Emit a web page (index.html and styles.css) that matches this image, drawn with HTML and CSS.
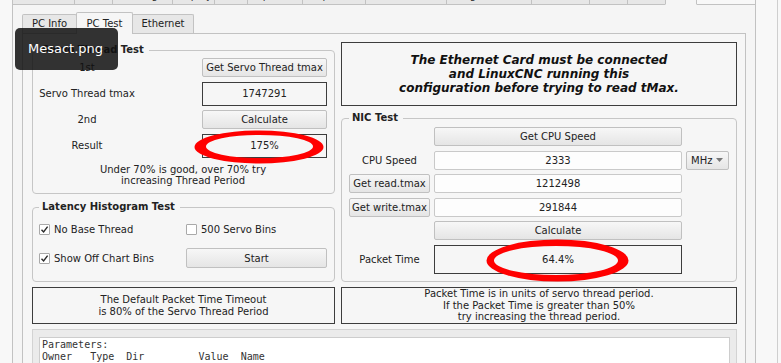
FILE: index.html
```html
<!DOCTYPE html>
<html lang="en">
<head>
  <meta charset="UTF-8">
  <title>Mesa Configuration Tool - PC Test</title>
  <link rel="stylesheet" href="styles.css">
</head>
<body>
  <div class="screen">
    <div class="main">
      <div class="top-tabs">
        <span class="ttab">Machine</span>
        <span class="ttab">Info</span>
        <span class="ttab">Settings</span>
        <span class="ttab">Display</span>
        <span class="ttab">Axis</span>
        <span class="ttab">Spindle</span>
        <span class="ttab">Options</span>
        <span class="ttab">Smart Serial</span>
        <span class="ttab">Daughter Cards</span>
        <span class="ttab">HAL</span>
        <span class="ttab">INI</span>
        <span class="ttab">Pins</span>
        <span class="ttab current">PC</span>
        <span class="ttab-fill"></span>
      </div>

      <div class="outer-pane">
        <div class="itabs">
          <span class="itab itab-info">PC Info</span>
          <span class="itab itab-test active">PC Test</span>
          <span class="itab itab-eth">Ethernet</span>
        </div>

        <div class="pane">
          <div class="pc-test">

            <div class="col">
              <fieldset class="group servo">
                <legend>Servo Thread Test</legend>
                <div class="servo-grid">
                  <span class="lbl">1st</span>
                  <button class="btn ctl">Get Servo Thread tmax</button>
                  <span class="lbl">Servo Thread tmax</span>
                  <span class="readout ctl">1747291</span>
                  <span class="lbl">2nd</span>
                  <button class="btn ctl">Calculate</button>
                  <span class="lbl">Result</span>
                  <span class="readout ctl marked">
                    175%
                    <svg class="ring ring-result" width="130" height="34" viewBox="0 0 130 34">
                      <path fill-rule="evenodd" d="M0.5,17 a64.5,16.5 0 1,0 129,0 a64.5,16.5 0 1,0 -129,0 Z M12,16.5 a53.5,11.5 0 1,0 107,0 a53.5,11.5 0 1,0 -107,0 Z"/>
                    </svg>
                  </span>
                </div>
                <p class="hint">Under 70% is good, over 70% try<br>increasing Thread Period</p>
              </fieldset>

              <fieldset class="group latency">
                <legend>Latency Histogram Test</legend>
                <div class="latency-grid">
                  <label class="check"><span class="box on"><svg width="9" height="9" viewBox="0 0 9 9"><path d="M1.5 4.8 L3.6 7 L7.6 1.6"/></svg></span>No Base Thread</label>
                  <label class="check"><span class="box"></span>500 Servo Bins</label>
                  <label class="check"><span class="box on"><svg width="9" height="9" viewBox="0 0 9 9"><path d="M1.5 4.8 L3.6 7 L7.6 1.6"/></svg></span>Show Off Chart Bins</label>
                  <button class="btn">Start</button>
                </div>
              </fieldset>
            </div>

            <div class="col">
              <div class="notice">
                The Ethernet Card must be connected<br>
                and LinuxCNC running this<br>
                configuration before trying to read tMax.
              </div>

              <fieldset class="group nic">
                <legend>NIC Test</legend>
                <div class="nic-grid">
                  <button class="btn mid">Get CPU Speed</button>
                  <span class="lbl">CPU Speed</span>
                  <span class="edit">2333</span>
                  <span class="combo">MHz<svg width="7" height="4" viewBox="0 0 7 4"><path d="M0 0 H7 L3.5 4 Z"/></svg></span>
                  <button class="btn">Get read.tmax</button>
                  <span class="edit">1212498</span>
                  <button class="btn">Get write.tmax</button>
                  <span class="edit">291844</span>
                  <button class="btn mid">Calculate</button>
                  <span class="lbl">Packet Time</span>
                  <span class="readout marked">
                    64.4%
                    <svg class="ring ring-packet" width="143" height="43" viewBox="0 0 143 43">
                      <path fill-rule="evenodd" d="M0.5,21.5 a71,21 0 1,0 142,0 a71,21 0 1,0 -142,0 Z M8,21.5 a62,14.5 0 1,0 124,0 a62,14.5 0 1,0 -124,0 Z"/>
                    </svg>
                  </span>
                </div>
              </fieldset>
            </div>

            <div class="frame-note">
              The Default Packet Time Timeout<br>
              is 80% of the Servo Thread Period
            </div>
            <div class="frame-note">
              Packet Time is in units of servo thread period.<br>
              If the Packet Time is greater than 50%<br>
              try increasing the thread period.
            </div>

            <div class="params">
<pre>Parameters:
Owner   Type  Dir         Value  Name</pre>
            </div>

          </div>
        </div>
      </div>
    </div>
    <div class="gutter"></div>

    <div class="tooltip">Mesact.png</div>
  </div>
</body>
</html>
```

FILE: styles.css
```css
* {
  box-sizing: border-box;
}

html, body {
  margin: 0;
  padding: 0;
  background: #f8f8f8;
  color: #222;
  font-family: "DejaVu Sans", "Liberation Sans", sans-serif;
  font-size: 10px;
  overflow: hidden;
}

.screen {
  position: relative;
  display: flex;
  height: 363px;
  padding-left: 12px;
}

.main {
  width: 744px;
  flex: none;
}

.gutter {
  width: 22px;
  flex: none;
  border-right: 1px solid #cfcfcf;
}

/* main window tabs, only their lower edge is on screen */
.top-tabs {
  display: flex;
  align-items: flex-end;
  height: 5px;
  overflow: hidden;
}

.ttab {
  flex: none;
  height: 22px;
  padding-top: 5px;
  line-height: 14px;
  text-align: center;
  white-space: nowrap;
  overflow: hidden;
  color: #333;
  background: #e7e7e7;
  border: 1px solid #c2c2c2;
  border-right: none;
}

.ttab:nth-child(1) { width: 62px; }
.ttab:nth-child(2) { width: 38px; }
.ttab:nth-child(3) { width: 60px; }
.ttab:nth-child(4) { width: 42px; }
.ttab:nth-child(5) { width: 33px; }
.ttab:nth-child(6) { width: 55px; }
.ttab:nth-child(7) { width: 63px; }
.ttab:nth-child(8) { width: 81px; }
.ttab:nth-child(9) { width: 85px; }
.ttab:nth-child(10) { width: 58px; }
.ttab:nth-child(11) { width: 38px; }
.ttab:nth-child(12) { width: 38px; }

.ttab.current {
  width: 32px;
  background: #f5f5f5;
  border-right: 1px solid #c2c2c2;
  border-bottom-color: #f5f5f5;
}

.ttab-fill {
  flex: 1;
  height: 5px;
  border-bottom: 1px solid #c2c2c2;
  border-right: 1px solid #c2c2c2;
}

.outer-pane {
  height: 400px;
  padding: 7px 9px 0 9px;
  background: #f5f5f5;
  border: 1px solid #c2c2c2;
  border-top: none;
}

/* inner tab widget */
.itabs {
  position: relative;
  z-index: 1;
  display: flex;
  align-items: flex-end;
  height: 22px;
}

.itab {
  height: 19px;
  margin-bottom: 1px;
  line-height: 18px;
  text-align: center;
  background: #e7e7e7;
  border: 1px solid #c2c2c2;
  border-bottom: none;
  border-radius: 2px 2px 0 0;
}

.itab-info { width: 55px; }
.itab-test { width: 57px; margin-left: -1px; }
.itab-eth { width: 62px; margin-left: -1px; }

.itab.active {
  height: 22px;
  margin-bottom: 0;
  padding-top: 2px;
  background: #f6f6f6;
  position: relative;
  z-index: 2;
}

.pane {
  height: 400px;
  margin-top: -1px;
  padding: 8px 8px 0 9px;
  background: #f6f6f6;
  border: 1px solid #c2c2c2;
}

.pc-test {
  display: grid;
  grid-template-columns: 303px 396px;
  column-gap: 6px;
  row-gap: 5px;
}

.col {
  display: flex;
  flex-direction: column;
}

/* group boxes */
.group {
  margin: 0;
  min-width: 0;
  border: 1px solid #c6c6c6;
  border-radius: 4px;
}

.group legend {
  padding: 0 5px 0 3px;
  line-height: 14px;
  font-weight: bold;
}

.servo {
  margin-top: 1px;
  padding: 1px 7px 6px 6px;
}

.latency {
  flex: 1;
  margin-top: 6.5px;
  padding: 5px 7px 8px 6px;
}

.nic {
  flex: 1;
  margin-top: 5px;
  padding: 2px 7px 7.5px 7px;
}

.lbl {
  text-align: center;
  white-space: nowrap;
}

.servo-grid {
  display: grid;
  grid-template-columns: 96px 67px 125px;
  grid-template-rows: 19px 24px 19px 24px;
  row-gap: 4.5px;
  align-items: center;
}

.servo-grid .lbl {
  grid-column: 1;
}

.servo-grid .ctl {
  grid-column: 3;
  height: 100%;
}

.hint {
  margin: 6px 0 0;
  line-height: 11.5px;
  text-align: center;
}

.latency-grid {
  display: grid;
  grid-template-columns: 141px 141px;
  grid-template-rows: 20px 20px;
  column-gap: 6px;
  row-gap: 9px;
  align-items: center;
}

.latency-grid .btn {
  height: 20px;
}

.check {
  display: flex;
  align-items: center;
  gap: 4px;
  white-space: nowrap;
}

.box {
  display: flex;
  align-items: center;
  justify-content: center;
  width: 11px;
  height: 11px;
  background: #fff;
  border: 1px solid #a9a9a9;
  border-radius: 1px;
}

.box svg path {
  fill: none;
  stroke: #2a2a2a;
  stroke-width: 1.4;
}

.nic-grid {
  display: grid;
  grid-template-columns: 81px 248px 43px;
  grid-template-rows: 19px 19px 19px 19px 19px 29px;
  column-gap: 4px;
  row-gap: 4.5px;
}

.nic-grid > * {
  height: 100%;
}

.nic-grid .lbl {
  grid-column: 1;
  display: flex;
  align-items: center;
  justify-content: center;
}

.nic-grid .mid,
.nic-grid .edit,
.nic-grid .readout {
  grid-column: 2;
}

.nic-grid .btn:not(.mid) {
  grid-column: 1;
}

/* widgets */
.btn {
  padding: 0;
  font: inherit;
  color: #222;
  white-space: nowrap;
  background: linear-gradient(#f7f7f7, #e5e5e5);
  border: 1px solid #c0c0c0;
  border-radius: 2px;
}

.edit,
.readout {
  display: flex;
  align-items: center;
  justify-content: center;
}

.edit {
  background: #fdfdfd;
  border: 1px solid #c9c9c9;
  border-radius: 2px;
}

.readout {
  background: #f6f6f6;
  border: 1px solid #3d3d3d;
}

.combo {
  grid-column: 3;
  display: flex;
  align-items: center;
  justify-content: space-between;
  padding: 0 5px 0 4px;
  background: linear-gradient(#f7f7f7, #e5e5e5);
  border: 1px solid #c0c0c0;
  border-radius: 2px;
}

.combo svg path {
  fill: #777;
}

/* red marks drawn over the read-outs */
.marked {
  position: relative;
}

.ring {
  position: absolute;
  pointer-events: none;
}

.ring path {
  fill: #ff0000;
}

.ring-result {
  left: -9px;
  top: -5px;
}

.ring-packet {
  left: 51px;
  top: -6.5px;
}

.notice {
  display: flex;
  align-items: center;
  justify-content: center;
  height: 64px;
  font-size: 12px;
  font-weight: bold;
  font-style: italic;
  line-height: 14px;
  text-align: center;
  color: #111;
  background: #f6f6f6;
  border: 1px solid #3d3d3d;
}

.frame-note {
  display: flex;
  align-items: center;
  justify-content: center;
  height: 37px;
  line-height: 11.5px;
  text-align: center;
  border: 1px solid #3d3d3d;
}

.params {
  grid-column: 1 / 3;
  height: 80px;
  padding: 7px 6px 0;
  background: #ebebeb;
  border: 1px solid #d3d3d3;
}

.params pre {
  height: 100%;
  margin: 0;
  padding: 1px 2px;
  font-family: "DejaVu Sans Mono", "Liberation Mono", monospace;
  font-size: 10px;
  line-height: 12px;
  color: #333;
  background: #fff;
  border: 1px solid #cdcdcd;
}

.tooltip {
  position: absolute;
  left: 15px;
  top: 28px;
  z-index: 5;
  width: 103px;
  height: 42px;
  padding-left: 13px;
  font-size: 13px;
  line-height: 42px;
  color: #fff;
  background: rgba(15, 15, 15, 0.85);
  border-radius: 5px;
}
```
